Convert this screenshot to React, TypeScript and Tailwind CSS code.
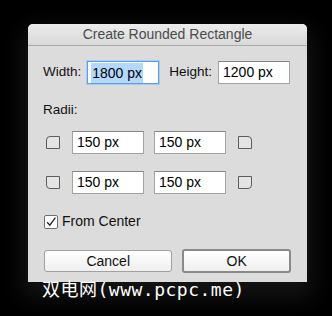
import React from 'react';

const font = { fontFamily: '"Liberation Sans", Arial, sans-serif' };

const Field: React.FC<{ value: string; selected?: boolean }> = ({ value, selected }) => (
  <div
    className={
      selected
        ? 'w-[72px] h-[23px] bg-white border border-[#5f9de6] shadow-[0_0_0_1px_#a8cbf4] flex items-center pl-[3px] text-[14px] text-black'
        : 'w-[72px] h-[23px] bg-white border border-[#a3a3a3] border-t-[#858585] flex items-center pl-[4px] text-[14px] text-black'
    }
  >
    {selected ? <span className="bg-[#b3d7ff] px-[1px] leading-[20px]">{value}</span> : <span>{value}</span>}
  </div>
);

const Corner: React.FC<{ corner: 'tl' | 'tr' | 'bl' | 'br' }> = ({ corner }) => {
  const cls =
    corner === 'tl'
      ? 'rounded-tl-[4px]'
      : corner === 'tr'
      ? 'rounded-tr-[4px]'
      : corner === 'bl'
      ? 'rounded-bl-[4px]'
      : 'rounded-br-[4px]';
  return <div className={`w-[14px] h-[13px] border border-[#5c5c5c] bg-[#e4e4e4] ${cls}`} />;
};

export default function App() {
  return (
    <div className="w-[332px] h-[316px] bg-black overflow-hidden pt-[24px] pl-[28px]" style={font}>
      <div className="w-[279px] h-[258px] bg-[#dcdcdc] rounded-t-[5px] shadow-[0_10px_22px_6px_rgba(22,22,22,0.9)] flex flex-col">
        <div className="h-[22px] rounded-t-[5px] bg-gradient-to-b from-[#ececec] to-[#d9d9d9] border-b border-[#ababab] flex items-center justify-center text-[14px] text-[#4b4b4b]">
          Create Rounded Rectangle
        </div>

        <div className="flex flex-col pl-[15px] pr-[16px] text-[13.5px] text-[#111]">
          <div className="flex items-center mt-[15px]">
            <span>Width:</span>
            <div className="ml-[6px]">
              <Field value="1800 px" selected />
            </div>
            <span className="ml-[10px]">Height:</span>
            <div className="ml-[6px]">
              <Field value="1200 px" />
            </div>
          </div>

          <div className="mt-[18px] leading-[16px]">Radii:</div>

          <div className="flex items-center mt-[13px] pl-[3px]">
            <Corner corner="tl" />
            <div className="ml-[12px]">
              <Field value="150 px" />
            </div>
            <div className="ml-[10px]">
              <Field value="150 px" />
            </div>
            <div className="ml-[12px]">
              <Corner corner="tr" />
            </div>
          </div>

          <div className="flex items-center mt-[17px] pl-[3px]">
            <Corner corner="bl" />
            <div className="ml-[12px]">
              <Field value="150 px" />
            </div>
            <div className="ml-[10px]">
              <Field value="150 px" />
            </div>
            <div className="ml-[12px]">
              <Corner corner="br" />
            </div>
          </div>

          <div className="flex items-center mt-[17px] pl-[1px]">
            <div className="w-[14px] h-[14px] bg-white border border-[#6e6e6e] rounded-[2px] flex items-center justify-center">
              <svg width="12" height="12" viewBox="0 0 12 12">
                <path d="M2.2 6.2 L4.8 9.2 L10.4 1.6" fill="none" stroke="#222" strokeWidth="1.3" />
              </svg>
            </div>
            <span className="ml-[4px] text-[14px]">From Center</span>
          </div>

          <div className="flex items-center mt-[17px] pl-[1px] text-[14px]">
            <div className="w-[129px] h-[22px] rounded-[3px] border border-[#a1a1a1] bg-gradient-to-b from-white to-[#efefef] flex items-center justify-center">
              Cancel
            </div>
            <div className="ml-[10px] w-[109px] h-[24px] rounded-[3px] border-2 border-[#8a8a8a] bg-gradient-to-b from-white to-[#efefef] flex items-center justify-center">
              OK
            </div>
          </div>
        </div>
      </div>
      <div
        className="ml-[14px] -mt-[2px] text-[18px] leading-[20px] text-white tracking-[0.5px]"
        style={{ fontFamily: '"DejaVu Sans Mono", "Noto Sans CJK SC", monospace' }}
      >
        双电网(www.pcpc.me)
      </div>
    </div>
  );
}
